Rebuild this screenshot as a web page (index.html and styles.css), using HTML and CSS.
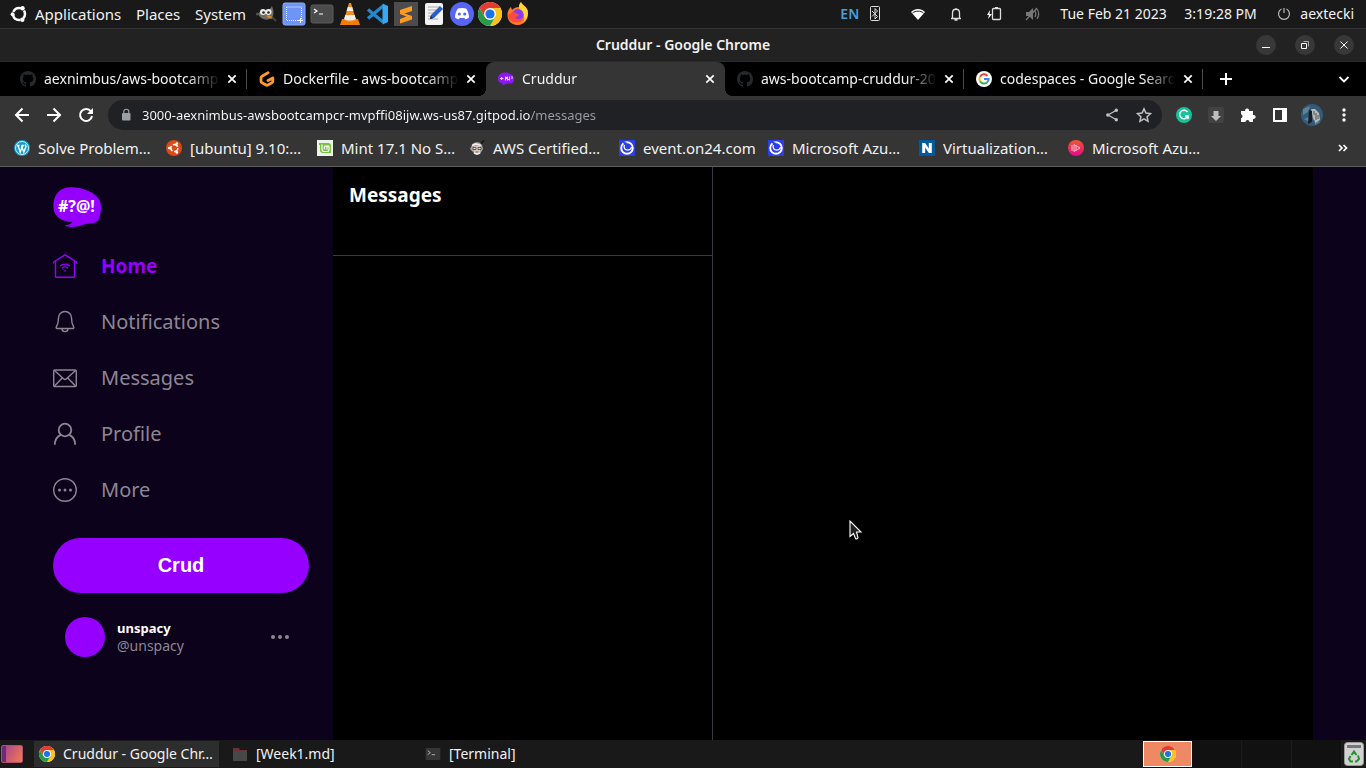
FILE: index.html
```html
<!DOCTYPE html>
<html lang="en">
<head>
<meta charset="utf-8">
<meta name="viewport" content="width=device-width, initial-scale=1">
<title>Cruddur - Google Chrome</title>
<link rel="stylesheet" href="styles.css">
</head>
<body class="desktop">
<svg class="sprite" aria-hidden="true">
  <symbol id="i-chrome" viewBox="0 0 24 24">
    <circle cx="12" cy="12" r="12" fill="#fff"/>
    <path d="M22.4 6A12 12 0 0 1 12 24l5.2-9L12 6z" fill="#fcc31e"/>
    <path d="M1.6 6A12 12 0 0 0 12 24l5.2-9-10.4 0z" fill="#2a9a48"/>
    <path d="M1.6 6A12 12 0 0 1 22.4 6H12L6.8 15z" fill="#e33b2e"/>
    <circle cx="12" cy="12" r="6" fill="#fff"/><circle cx="12" cy="12" r="4.6" fill="#1a73e8"/>
  </symbol>
  <symbol id="i-github" viewBox="0 0 16 16"><path fill="#24292e" d="M8 0C3.58 0 0 3.58 0 8c0 3.54 2.29 6.53 5.47 7.59.4.07.55-.17.55-.38 0-.19-.01-.82-.01-1.49-2.01.37-2.53-.49-2.69-.94-.09-.23-.48-.94-.82-1.13-.28-.15-.68-.52-.01-.53.63-.01 1.08.58 1.23.82.72 1.21 1.87.87 2.33.66.07-.52.28-.87.51-1.07-1.78-.2-3.64-.89-3.64-3.95 0-.87.31-1.59.82-2.15-.08-.2-.36-1.02.08-2.12 0 0 .67-.21 2.2.82.64-.18 1.32-.27 2-.27s1.36.09 2 .27c1.53-1.04 2.2-.82 2.2-.82.44 1.1.16 1.92.08 2.12.51.56.82 1.27.82 2.15 0 3.07-1.87 3.75-3.65 3.95.29.25.54.73.54 1.48 0 1.07-.01 1.93-.01 2.2 0 .21.15.46.55.38A8.01 8.01 0 0 0 16 8c0-4.42-3.58-8-8-8z"/></symbol>
  <symbol id="i-close" viewBox="0 0 16 16"><path d="M4.300 4.300l7.400 7.400M11.700 4.300l-7.400 7.400" stroke="#fff" stroke-width="1.700"/></symbol>
  <symbol id="i-swirl" viewBox="0 0 16 16"><path fill="#2c3ee8" d="M0 0h16v16H0z"/><circle cx="8" cy="8" r="5.800" fill="none" stroke="#fff" stroke-width="1.900"/><path d="M3.500 1.200L8.500 3 5.500 5.500z" fill="#2c3ee8"/><path d="M5.300 4.800C4.500 8 6 10.200 8.500 10.200c2 0 3.600-1.200 4.100-3" fill="none" stroke="#fff" stroke-width="1.300"/></symbol>
  <symbol id="i-term" viewBox="0 0 24 24"><rect x="1" y="3" width="22" height="18" rx="2" fill="#4b4b4b" stroke="#5c5c5c"/><path d="M4 7l3 2-3 2M9 12h4" fill="none" stroke="#fff" stroke-width="1.200"/></symbol>
</svg>

<header class="panel">
  <nav class="panel-menu">
    <button class="menu-item menu-apps"><svg width="18" height="18" viewBox="0 0 18 18"><circle cx="9" cy="9" r="6" fill="none" stroke="#fff" stroke-width="2.500" stroke-dasharray="9 3.566" stroke-dashoffset="-8"/><circle cx="2.600" cy="9.300" r="2" fill="#fff"/><circle cx="12.500" cy="3.300" r="2.200" fill="#fff"/><circle cx="12.300" cy="14.800" r="2.200" fill="#fff"/></svg>Applications</button>
    <button class="menu-item menu-places">Places</button>
    <button class="menu-item">System</button>
  </nav>
  <div class="launchers">
    <button class="launcher" aria-label="GIMP"><svg viewBox="0 0 24 24"><path d="M4 12c2-4 6-2 8-4 3 0 5-2 6-4 2 5 2 9 0 12-5 3-11 2-14-4z" fill="#706d66"/><circle cx="9" cy="10" r="3" fill="#eee"/><circle cx="14.500" cy="10" r="3" fill="#eee"/><circle cx="9.500" cy="10.500" r="1.300" fill="#222"/><circle cx="14.500" cy="10.500" r="1.300" fill="#222"/><circle cx="3.500" cy="12" r="1.500" fill="#555"/><path d="M13 14l6 2" stroke="#e98618" stroke-width="2"/><path d="M18 15l4 4" stroke="#444" stroke-width="2"/></svg></button>
    <button class="launcher" aria-label="Screenshot"><svg viewBox="0 0 24 24"><rect x="1" y="1" width="22" height="22" rx="2" fill="#6e94f5" stroke="#8aaafc"/><path d="M4.500 5h15v12M4.500 5v13.500H16" fill="none" stroke="#fff" stroke-dasharray="1 1"/><path d="M18.500 16v5M16 18.500h5" stroke="#fff"/></svg></button>
    <button class="launcher" aria-label="Terminal"><svg viewBox="0 0 24 24"><use href="#i-term"/></svg></button>
    <button class="launcher" aria-label="VLC"><svg viewBox="0 0 24 24"><path d="M4 17h16l2 6H2z" fill="#f07c00"/><path d="M11 1h2l5 17c-3 3-9 3-12 0z" fill="#f58a1f"/><path d="M9.800 5h4.400l1.200 4H8.600zM7.300 13h9.400l1.200 4c-3 2-9 2-11.800 0z" fill="#eee"/></svg></button>
    <button class="launcher" aria-label="Visual Studio Code"><svg viewBox="0 0 24 24"><path d="M2 7.500L17 20M2 16.500L17 4" stroke="#1f8ad2" stroke-width="3.200"/><path d="M16.500 1.500l5.500 2.500v16l-5.500 2.500z" fill="#36a9f2"/></svg></button>
    <button class="launcher" aria-label="Sublime Text"><svg viewBox="0 0 24 24"><path d="M0 0h24v24H0z" fill="#4c4c4c"/><path d="M18 4v5l-7.500 2.500L18 14v3.500L6 21.500v-4.500l6.500-2.500L6 12V8z" fill="#ff9a22"/></svg></button>
    <button class="launcher" aria-label="Text Editor"><svg viewBox="0 0 24 24"><rect x="3" y="1" width="18" height="22" rx="2" fill="#f3f3f3"/><path d="M6 5h12M6 8h10M6 11h8M6 14h5M6 17h10" stroke="#aaa"/><path d="M8 17l1-4 9-9 3 3-9 9z" fill="#2c5fca"/><path d="M8 17l.700-3 2.300 2.300z" fill="#222"/></svg></button>
    <button class="launcher" aria-label="Discord"><svg viewBox="0 0 24 24"><circle cx="12" cy="12" r="12" fill="#5865f2"/><path d="M8 6.500c2.500-.800 5.500-.800 8 0 2 2.500 3 6 3 9-1.200 1-2.500 1.500-3.800 1.800l-1-1.600c-1.400.300-3 .300-4.400 0l-1 1.600C7.500 17 6.200 16.500 5 15.500c0-3 1-6.500 3-9z" fill="#fff"/><circle cx="9.300" cy="12" r="1.600" fill="#5865f2"/><circle cx="14.700" cy="12" r="1.600" fill="#5865f2"/></svg></button>
    <button class="launcher" aria-label="Google Chrome"><svg viewBox="0 0 24 24"><use href="#i-chrome"/></svg></button>
    <button class="launcher" aria-label="Firefox"><svg viewBox="0 0 24 24"><path d="M12 23C5 23 1 18 1.500 12 1.700 9 3 6.500 5 5l1 3c2-2 4-3 7-3 0-2 .500-3.500 2-5 1 3 5 4 6.500 8C23.500 16 19 23 12 23z" fill="#ff7a25"/><path d="M15 0c1 3 5 4 6.500 8 1.500 5-1 10-4 12 2-6 0-10-4-12-1-3-.500-6 1.500-8z" fill="#ffd53a"/><circle cx="12" cy="12.500" r="5.500" fill="#8a3bea"/><path d="M2 13c1 7 7 8 11 7 3-.500 5-3 5-5-3 3-7 3-9 0 2 0 3-1 4-2-2-1-4-3-7-3z" fill="#ff4b3d"/></svg></button>
  </div>
  <div class="status">
    <span class="lang">EN</span>
    <svg class="st-bt" width="16" height="18" viewBox="0 0 16 18" fill="none" stroke="#ddd"><rect x="3.500" y="1.500" width="9" height="14" rx="1"/><path d="M5 6l5.500 5.500L8 14V3.500L10.500 6 5 11.500"/></svg>
    <svg class="st-icon" width="16" height="16" viewBox="0 0 16 16"><path d="M1 6c4-4 10-4 14 0l-7 8z" fill="#fff"/><path d="M2.500 7c3-2.500 8-2.500 11 0" stroke="#1a1a1a" fill="none"/></svg>
    <svg class="st-icon" width="16" height="16" viewBox="0 0 16 16" fill="none" stroke="#ddd" stroke-width="1.300"><path d="M3 12.500h10M4.500 12V7c0-5 7-5 7 0v5M6.500 14h3M8 2v1.500"/></svg>
    <svg class="st-icon" width="16" height="16" viewBox="0 0 16 16"><rect x="6.500" y="2.500" width="8" height="11" rx="1" fill="none" stroke="#ddd" stroke-width="1.300"/><path d="M9 1h3v1H9z" fill="#ddd"/><path d="M4 4L1 9h2l-1 4 4-5H3.500z" fill="#fff"/></svg>
    <svg class="st-icon" width="16" height="16" viewBox="0 0 16 16"><path d="M2 6h3l4-4v12l-4-4H2z" fill="#777"/><path d="M11 5c1 2 1 4 0 6M13 3c2 3 2 7 0 10M2 14L13 2" fill="none" stroke="#777" stroke-width="1.300"/></svg>
    <span class="date">Tue Feb 21 2023</span>
    <span class="clock">3:19:28 PM</span>
    <button class="user"><svg width="14" height="14" viewBox="0 0 14 14" fill="none" stroke="#bbb" stroke-width="1.200"><path d="M4.500 2a5.500 5.500 0 1 0 5 0M7 1v5"/></svg>aextecki</button>
  </div>
</header>

<section class="browser">
  <div class="titlebar">
    <span class="title">Cruddur - Google Chrome</span>
    <div class="win-buttons">
      <button class="win-button" aria-label="Minimize"><svg width="10" height="10" viewBox="0 0 10 10"><path d="M1 7.500h8" stroke="#fff"/></svg></button>
      <button class="win-button" aria-label="Restore"><svg width="10" height="10" viewBox="0 0 10 10" fill="none" stroke="#fff"><path d="M1.500 3.500h5v5h-5z"/><path d="M3.500 1.500h5v5" stroke="#aaa"/></svg></button>
      <button class="win-button" aria-label="Close"><svg width="10" height="10" viewBox="0 0 10 10"><path d="M1.500 1.500l7 7M8.500 1.500l-7 7" stroke="#fff"/></svg></button>
    </div>
  </div>

  <div class="tabs">
    <div class="tab"><svg class="fav"><use href="#i-github"/></svg><span class="tab-title">aexnimbus/aws-bootcamp</span><button class="tab-close" aria-label="Close tab"><svg class="fav"><use href="#i-close"/></svg></button></div>
    <div class="tab tab-before"><svg class="fav" viewBox="0 0 16 16"><path d="M9 1.800L3 5.200c-.600.400-1 .900-1 1.600v3.400c0 .700.400 1.300 1 1.600l4 2.200c.600.300 1.300.300 1.900 0l4-2.200c.600-.300.900-.900.900-1.600V7L9 9.500" fill="none" stroke="#ff9a2a" stroke-width="2.800" stroke-linejoin="round" stroke-linecap="round"/></svg><span class="tab-title">Dockerfile - aws-bootcamp</span><button class="tab-close" aria-label="Close tab"><svg class="fav"><use href="#i-close"/></svg></button></div>
    <div class="tab tab-active"><svg class="fav" viewBox="0 0 16 16"><path d="M4 2c5-1.500 11 1 12 5 .500 3-.500 5-3 5.500H9L4 14.500l1-2C1 12 0 10 0 7c0-2 1-4 4-5z" fill="#8d18f2"/><path d="M2 7.500h3.500M3.700 6v3M7.500 5.500v4M9.500 5.500v4M11.500 5.500v4M14 5v3M7.500 6l4 3" stroke="#e9c8ff" stroke-width="1.100"/></svg><span class="tab-title">Cruddur</span><button class="tab-close" aria-label="Close tab"><svg class="fav"><use href="#i-close"/></svg></button></div>
    <div class="tab"><svg class="fav"><use href="#i-github"/></svg><span class="tab-title">aws-bootcamp-cruddur-2023</span><button class="tab-close" aria-label="Close tab"><svg class="fav"><use href="#i-close"/></svg></button></div>
    <div class="tab"><svg class="fav" viewBox="0 0 16 16"><circle cx="8" cy="8" r="8" fill="#fff"/><g fill="none" stroke-width="2"><path d="M11.500 4.800A4.600 4.600 0 0 0 4 5.700" stroke="#ea4335"/><path d="M4 5.700a4.600 4.600 0 0 0 0 4.600" stroke="#fbbc05"/><path d="M4 10.300a4.600 4.600 0 0 0 7 1.100" stroke="#34a853"/><path d="M11 11.400A4.600 4.600 0 0 0 12.600 8H8" stroke="#4285f4"/></g></svg><span class="tab-title">codespaces - Google Search</span><button class="tab-close" aria-label="Close tab"><svg class="fav"><use href="#i-close"/></svg></button></div>
    <button class="new-tab" aria-label="New tab"><svg width="16" height="16" viewBox="0 0 16 16"><path d="M8 2v12M2 8h12" stroke="#fff" stroke-width="2"/></svg></button>
    <button class="tab-search" aria-label="Search tabs"><svg width="16" height="16" viewBox="0 0 16 16"><path d="M3.500 6L8 10.500 12.500 6" fill="none" stroke="#fff" stroke-width="1.800"/></svg></button>
  </div>

  <div class="toolbar">
    <button class="tool" aria-label="Back"><svg width="16" height="16" viewBox="0 0 16 16"><path d="M8.500 1.500L2 8l6.500 6.500M2 8h13" fill="none" stroke="#fff" stroke-width="2"/></svg></button>
    <button class="tool" aria-label="Forward"><svg width="16" height="16" viewBox="0 0 16 16"><path d="M7.500 1.500L14 8l-6.500 6.500M14 8H1" fill="none" stroke="#fff" stroke-width="2"/></svg></button>
    <button class="tool" aria-label="Reload"><svg width="16" height="16" viewBox="0 0 16 16"><path d="M13 4.500A6 6 0 1 0 14 9" fill="none" stroke="#fff" stroke-width="2"/><path d="M15 1v6H9z" fill="#fff"/></svg></button>
    <div class="omnibox">
      <svg width="12" height="14" viewBox="0 0 12 14"><rect x="2" y="5" width="8.500" height="7.500" rx="1" fill="#9aa0a6"/><path d="M3.800 5.500V3.500c0-3 5-3 5 0v2" fill="none" stroke="#9aa0a6" stroke-width="1.200"/></svg>
      <input class="url" type="text" aria-label="Address" value="3000-aexnimbus-awsbootcampcr-mvpffi08ijw.ws-us87.gitpod.io/messages">
      <button class="omni-button" aria-label="Share"><svg width="16" height="16" viewBox="0 0 16 16"><path d="M12 3.500L4 8l8 4.500" fill="none" stroke="#bdc1c6" stroke-width="1.300"/><circle cx="12.300" cy="3.300" r="1.700" fill="#bdc1c6"/><circle cx="3.800" cy="8" r="1.700" fill="#bdc1c6"/><circle cx="12.300" cy="12.700" r="1.700" fill="#bdc1c6"/></svg></button>
      <button class="omni-button" aria-label="Bookmark"><svg width="16" height="16" viewBox="0 0 16 16"><path d="M8 1.800l1.900 4.300 4.600.500-3.400 3.100.9 4.600-4-2.400-4 2.400.900-4.600L1.500 6.600l4.600-.500z" fill="none" stroke="#bdc1c6" stroke-width="1.500"/></svg></button>
    </div>
    <div class="extensions">
      <button class="tool" aria-label="Grammarly"><svg width="16" height="16" viewBox="0 0 16 16"><circle cx="8" cy="8" r="8" fill="#15c39a"/><path d="M11.500 5A4.300 4.300 0 1 0 12 9H9M12 9v3" fill="none" stroke="#fff" stroke-width="1.500"/></svg></button>
      <button class="tool" aria-label="Downloads"><svg width="16" height="16" viewBox="0 0 16 16"><rect width="16" height="16" rx="2" fill="#424242"/><path d="M5.500 4h5v5H13l-5 5-5-5h2.500z" fill="#bdbdbd"/></svg></button>
      <button class="tool" aria-label="Extensions"><svg width="16" height="16" viewBox="0 0 16 16"><path d="M1 4h4.200a2 2 0 1 1 3.800 0h4v4a2 2 0 1 1 0 3.800V15H9.500a2 2 0 0 0-4 0H1v-3.800a2 2 0 0 0 0-3.900z" fill="#fff"/></svg></button>
      <button class="tool" aria-label="Side panel"><svg width="16" height="16" viewBox="0 0 16 16"><path d="M1 1h14v14H1zM3 3v10h7V3z" fill="#fff" fill-rule="evenodd"/></svg></button>
      <button class="tool" aria-label="Account"><svg width="22" height="22" viewBox="0 0 22 22"><circle cx="11" cy="11" r="11" fill="#335a78"/><path d="M2 5l7-3-2 6-5 3zM14 16l5 2-5 3zM3 15l5-2v5z" fill="#5e8298"/><path d="M10 5h4l4 4 1 7-5 3-2-5z" fill="#b9b8b2"/><path d="M8 6l3 1v11l-4 2z" fill="#161e29"/><path d="M13 7v4m2-2v7m2-5v4m-4 1v3" stroke="#4e555c"/></svg></button>
      <button class="tool" aria-label="Menu"><svg width="16" height="16" viewBox="0 0 16 16" fill="#fff"><circle cx="8" cy="3" r="1.700"/><circle cx="8" cy="8" r="1.700"/><circle cx="8" cy="13" r="1.700"/></svg></button>
    </div>
  </div>

  <nav class="bookmarks">
    <a class="bookmark" href="#"><svg class="fav" viewBox="0 0 16 16"><circle cx="8" cy="8" r="8" fill="#159cc9"/><circle cx="8" cy="8" r="6.500" fill="none" stroke="#fff" stroke-width=".800"/><path d="M3 5.500h2.500M7.500 5.500h2.500M4 5.500L6.200 12 8 7.500 9.800 12l2.200-5.500-1-2M9 5.500L8 7.500 7.500 5.500" fill="none" stroke="#fff" stroke-width="1.400"/></svg>Solve Problem…</a>
    <a class="bookmark" href="#"><svg class="fav" viewBox="0 0 16 16"><circle cx="8" cy="8" r="8" fill="#dd4814"/><circle cx="8.300" cy="8" r="3.500" fill="none" stroke="#fff" stroke-width="1.600" stroke-dasharray="5.600 1.700"/><circle cx="3.200" cy="8" r="1.300" fill="#fff"/><circle cx="10.800" cy="3.600" r="1.300" fill="#fff"/><circle cx="10.800" cy="12.400" r="1.300" fill="#fff"/></svg>[ubuntu] 9.10:…</a>
    <a class="bookmark" href="#"><svg class="fav" viewBox="0 0 16 16"><path d="M0 0h16v16H0z" fill="#eef3e9"/><path d="M2 3h9c2 0 3 1 3 3v7H6c-2 0-3-1-3-3V5H2z" fill="#78c03f"/><path d="M5 4.500V9c0 2 1 2.500 2 2.500h3c1 0 2-.500 2-2V7c0-1.500-2-1.500-2 0v2.500M10 7c0-1.500-2.500-1.500-2.500 0v2.500" fill="none" stroke="#fff" stroke-width="1.200"/></svg>Mint 17.1 No S…</a>
    <a class="bookmark" href="#"><svg class="fav" viewBox="0 0 16 16"><path d="M3 5c1-3 8-4 10 0l1 4-3 5H6L1 9z" fill="#a9a39f"/><path d="M5 6h6v4c0 5-6 5-6 0z" fill="#e3c6ba"/><path d="M4 7.500h3v2H4zM9 7.500h3v2H9zM6.500 12h3" fill="#ddd" stroke="#444" stroke-width=".800"/><path d="M12 4l3-4" stroke="#151515" stroke-width="1.500"/><path d="M3 5.500l4-1.500 5 1.500M5 13l3 1 3-1" stroke="#eee" fill="none" stroke-width="1.800"/></svg>AWS Certified…</a>
    <a class="bookmark" href="#"><svg class="fav"><use href="#i-swirl"/></svg>event.on24.com</a>
    <a class="bookmark" href="#"><svg class="fav"><use href="#i-swirl"/></svg>Microsoft Azu…</a>
    <a class="bookmark" href="#"><svg class="fav" viewBox="0 0 16 16"><path d="M0 0h16v16H0z" fill="#005a9c"/><path d="M3.200 3h3l3.600 5.500V3h3v10h-3L6.200 7.500V13h-3z" fill="#fff"/></svg>Virtualization…</a>
    <a class="bookmark" href="#"><svg class="fav" viewBox="0 0 16 16"><defs><linearGradient id="g-play" x2="0" y2="1"><stop stop-color="#ee5a2b"/><stop offset="1" stop-color="#e6088c"/></linearGradient></defs><circle cx="8" cy="8" r="8" fill="url(#g-play)"/><path d="M4 5v6M6 4.500v7L12 8zM8 5.500v5" fill="none" stroke="#fbc0cf"/></svg>Microsoft Azu…</a>
    <button class="more-bookmarks" aria-label="More bookmarks"><svg width="16" height="16" viewBox="0 0 16 16"><path d="M4 5l3 3-3 3M8.500 5l3 3-3 3" fill="none" stroke="#fff" stroke-width="1.700"/></svg></button>
  </nav>

  <div class="page">
    <aside class="sidebar">
      <a href="#" class="brand" aria-label="Cruddur home"><svg width="48" height="40" viewBox="0 0 48 40"><path d="M14 .500C28-1 42 5 46.500 13c2.500 5 1.500 14-.500 19-2 3.500-5 4.500-9 4.500-6 0-10 3.500-19 3.500-3 0-5-1-6.500-1.500 4-.500 7-1.500 8-3.500C10 34.500 3 31 1 24-1 14 2 3 14 .500z" fill="#9500ff"/><text class="brand-text" x="5" y="25">#?@!</text></svg></a>
      <nav class="nav">
        <a href="#" class="nav-link nav-current"><svg width="24" height="24" viewBox="0 0 24 24"><path d="M.500 8L12 .800 23.500 8v1.500M.500 8v1.500M2.500 7v15.500q0 .800.800.800h17.400q.800 0 .800-.800V7"/><path d="M7.200 12c2.700-2.500 6.900-2.500 9.600 0M9 14.200c1.800-1.600 4.200-1.600 6 0M11.300 17h1.400"/></svg>Home</a>
        <a href="#" class="nav-link"><svg width="24" height="24" viewBox="0 0 24 24"><path d="M12 1.500c-4 0-6.500 3-6.500 6.500 0 5-.500 6.500-2.200 9-.400.800 0 1.500.700 1.500h16c.700 0 1.100-.700.700-1.500-1.700-2.500-2.200-4-2.200-9 0-3.500-2.500-6.500-6.500-6.500zM9 18.500c0 4.200 6 4.200 6 0"/></svg>Notifications</a>
        <a href="#" class="nav-link"><svg width="24" height="24" viewBox="0 0 24 24"><rect x=".700" y="4" width="22.600" height="16.500" rx="1"/><path d="M1.500 4.500l9 8.300c1 .900 2 .900 3 0l9-8.300M1.500 20l7.700-8M22.500 20l-7.700-8"/></svg>Messages</a>
        <a href="#" class="nav-link"><svg class="profile-icon" width="24" height="24" viewBox="0 0 24 24"><circle cx="12" cy="8" r="6.300"/><path d="M1.800 22.800c0-5 2.500-8.500 6-10M22.200 22.800c0-5-2.500-8.500-6-10"/></svg>Profile</a>
        <a href="#" class="nav-link"><svg width="24" height="24" viewBox="0 0 24 24"><circle cx="12" cy="12" r="11.300"/><g fill="#8d8693" stroke="none"><circle cx="6.500" cy="12" r="1.500"/><circle cx="12" cy="12" r="1.500"/><circle cx="17.500" cy="12" r="1.500"/></g></svg>More</a>
      </nav>
      <button class="crud">Crud</button>
      <button class="profile">
        <span class="avatar"></span>
        <span class="who"><strong class="name">unspacy</strong><span class="handle">@unspacy</span></span>
        <svg width="18" height="4" viewBox="0 0 18 4" fill="#8d8693"><circle cx="2" cy="2" r="2"/><circle cx="9" cy="2" r="2"/><circle cx="16" cy="2" r="2"/></svg>
      </button>
    </aside>
    <section class="groups">
      <header class="groups-head"><h1 class="groups-title">Messages</h1></header>
    </section>
    <main class="conversation"></main>
  </div>
</section>

<footer class="taskbar">
  <button class="show-desktop" aria-label="Show desktop"></button>
  <button class="task task-active"><svg class="fav"><use href="#i-chrome"/></svg>Cruddur - Google Chr…</button>
  <button class="task"><svg class="fav" viewBox="0 0 16 16"><path d="M1 2h6l1 2h7v4H1z" fill="#6b2f38"/><rect x="1" y="5" width="14" height="10" rx="1" fill="#484848"/></svg>[Week1.md]</button>
  <button class="task"><svg class="fav" viewBox="0 0 24 24"><rect x="1" y="3" width="22" height="18" rx="1" fill="#363636"/><path d="M4 7l4 3-4 3M10 13h5" fill="none" stroke="#aaa" stroke-width="1.500"/></svg>[Terminal]</button>
  <div class="workspaces">
    <button class="workspace workspace-active" aria-label="Workspace 1"><svg class="fav"><use href="#i-chrome"/></svg></button>
    <button class="workspace" aria-label="Workspace 2"></button>
    <button class="workspace" aria-label="Workspace 3"></button>
    <button class="workspace" aria-label="Workspace 4"></button>
  </div>
  <button class="trash" aria-label="Trash"><svg width="20" height="24" viewBox="0 0 20 24"><rect x=".500" y=".500" width="19" height="23" rx="3" fill="#d2d2d2" stroke="#999"/><path d="M3 3h14v3H3z" fill="#777"/><path d="M7.500 13L10 9.500l2.500 3.500M14 13.500l1 3.500-2.500 2.500H11M9 19.500H6.500L5 17l1.500-3" fill="none" stroke="#23962b" stroke-width="2"/></svg></button>
</footer>
<svg class="cursor" width="14" height="20" viewBox="0 0 14 20" aria-hidden="true"><path d="M1 1v15.500l3.500-3 2 5c1 .800 2.500.200 2.500-1L7.500 12H12z" fill="#222" stroke="#fff" stroke-width="1.100"/></svg>
</body>
</html>
```
FILE: styles.css
```css
* { box-sizing: border-box; }

button, input {
  font: inherit;
  color: inherit;
  background: none;
  border: 0;
  padding: 0;
  margin: 0;
}

a { color: inherit; text-decoration: none; }
svg { flex: none; display: block; }
button { display: flex; align-items: center; justify-content: center; white-space: nowrap; }

.sprite { position: absolute; width: 0; height: 0; }
.fav { width: 16px; height: 16px; }

.desktop {
  margin: 0;
  min-height: 100vh;
  display: flex;
  flex-direction: column;
  position: relative;
  overflow: hidden;
  background: #000;
  color: #f2f2f2;
  font-family: "Noto Sans", "Open Sans", sans-serif;
  font-size: 14px;
  line-height: 20px;
}

/* Desktop panel */
.panel {
  display: flex;
  align-items: center;
  height: 29px;
  background: #191919;
  border-bottom: 1px solid #323232;
}
.panel-menu { display: flex; width: 252px; padding-left: 10px; font-size: 15px; }
.menu-item { gap: 7px; }
.menu-apps { width: 126px; justify-content: flex-start; }
.menu-places { width: 59px; justify-content: flex-start; }
.launchers { display: flex; }
.launcher { width: 28px; height: 28px; }
.launcher svg { width: 24px; height: 24px; }
.status { margin-left: auto; display: flex; align-items: center; padding-right: 12px; }
.lang { width: 27px; color: #4a9fdc; font-weight: 600; }
.st-bt { margin-right: 27px; }
.st-icon { margin-right: 22px; }
.date { width: 124px; margin-left: -2px; }
.clock { width: 93px; }
.user { gap: 9px; }

/* Window frame */
.browser { flex: 1; display: flex; flex-direction: column; background: #353535; }
.titlebar {
  height: 33px;
  display: grid;
  grid-template-columns: 1fr auto 1fr;
  align-items: center;
  background: #222;
  border-bottom: 1px solid #2a2a2a;
}
.title { grid-column: 2; font-weight: 600; font-size: 14px; }
.win-buttons { display: flex; justify-content: flex-end; gap: 19px; padding-right: 12px; }
.win-button { width: 20px; height: 20px; border-radius: 50%; background: #383838; }

.tabs { display: flex; align-items: stretch; height: 34px; padding-left: 8px; background: #000; }
.tab {
  flex: 0 1 239px;
  min-width: 0;
  display: flex;
  align-items: center;
  padding: 0 7px 0 12px;
  gap: 8px;
  background: linear-gradient(#4a4a4a, #4a4a4a) right / 1px 20px no-repeat;
}
.tab-title {
  flex: 1;
  min-width: 0;
  overflow: hidden;
  white-space: nowrap;
  margin-right: -4px;
  mask-image: linear-gradient(to left, transparent, #000 32px);
}
.tab-before { background: none; }
.tab-active { position: relative; background: #353535; border-radius: 8px 8px 0 0; }
.tab-active::before, .tab-active::after {
  content: "";
  position: absolute;
  bottom: 0;
  width: 8px;
  height: 8px;
}
.tab-active::before { right: 100%; background: radial-gradient(circle at 0 0, #000 8px, #353535 8px); }
.tab-active::after { left: 100%; background: radial-gradient(circle at 100% 0, #000 8px, #353535 8px); }
.new-tab { width: 46px; }
.tab-search { margin-left: auto; width: 44px; }

.toolbar { display: flex; align-items: center; height: 38px; padding-left: 6px; }
.tool { width: 32px; height: 30px; }
.omnibox {
  flex: 1;
  display: flex;
  align-items: center;
  height: 30px;
  margin: 0 6px;
  padding: 0 7px 0 12px;
  gap: 10px;
  border-radius: 15px;
  background: #202124;
}
.url {
  flex: 1;
  min-width: 0;
  height: 30px;
  font-size: 13px;
  color: transparent;
  background: linear-gradient(to right, #fff 388px, #9aa0a6 388px);
  background-clip: text;
  outline: 0;
}
.omni-button { width: 22px; }
.extensions { display: flex; padding-right: 6px; }

.bookmarks {
  display: grid;
  grid-template-columns: 152px 151px 152px 150px 149px 151px 149px auto 1fr;
  align-items: center;
  height: 33px;
  padding: 0 15px 4px 14px;
  border-bottom: 1px solid #5e5e5e;
  font-size: 15px;
}
.bookmark { display: flex; align-items: center; gap: 8px; white-space: nowrap; }
.more-bookmarks { justify-self: end; }

/* Cruddur application */
.page { flex: 1; display: flex; padding: 0 53px; background: #0d021b; }
.sidebar { flex: 0 0 280px; padding: 20px 24px 0 0; }
.brand { display: block; width: 48px; }
.brand-text { font: 700 16px "Noto Sans", sans-serif; fill: #fff; }
.nav { margin-top: 11px; }
.nav-link {
  display: flex;
  align-items: center;
  gap: 24px;
  height: 56px;
  font-size: 20px;
  color: #8d8693;
}
.nav-link svg { fill: none; stroke: currentColor; stroke-width: 1.400; }
.nav-link .profile-icon { stroke-width: 1.800; }
.nav-current { color: #9500ff; font-size: 19px; font-weight: 700; }
.crud {
  width: 100%;
  height: 55px;
  margin-top: 20px;
  border-radius: 28px;
  background: #9500ff;
  color: #fff;
  font: 700 20px "Liberation Sans", Arial, sans-serif;
}
.profile { width: 100%; margin-top: 12px; padding: 12px 20px 12px 12px; gap: 12px; text-align: left; }
.avatar { width: 40px; height: 40px; border-radius: 50%; background: #9500ff; }
.who { flex: 1; display: flex; flex-direction: column; line-height: 18px; }
.name { color: #fff; font-size: 13px; }
.handle { color: #8d8693; }
.groups { flex: 0 0 380px; background: #000; border-right: 1px solid #3b3848; }
.groups-head { height: 89px; padding: 16px; border-bottom: 1px solid #3b3848; }
.groups-title { margin: 0; font-size: 19px; line-height: 24px; color: #fff; }
.conversation { flex: 1; background: #000; }

/* Task bar */
.taskbar { display: flex; align-items: center; height: 28px; background: #191919; }
.show-desktop {
  width: 22px;
  height: 18px;
  margin: 0 11px 0 1px;
  border: 1px solid #b0506e;
  border-radius: 2px;
  background: linear-gradient(to right, #6e2a75 4px, transparent 4px), linear-gradient(120deg, #a23f9b, #f57c47);
}
.task { width: 185px; height: 26px; margin-right: 8px; padding-left: 5px; gap: 8px; justify-content: flex-start; }
.task-active { background: #2d2d2d; }
.workspaces { display: flex; align-self: stretch; margin-left: auto; background: #111; }
.workspace { width: 50px; border-right: 1px solid #1c1c1c; }
.workspace-active { width: 49px; margin: 1px 0; border: 1px solid #fff; background: #ef8963; }
.trash { margin: 0 2px; }

.cursor { position: absolute; left: 849px; top: 520px; }
```
